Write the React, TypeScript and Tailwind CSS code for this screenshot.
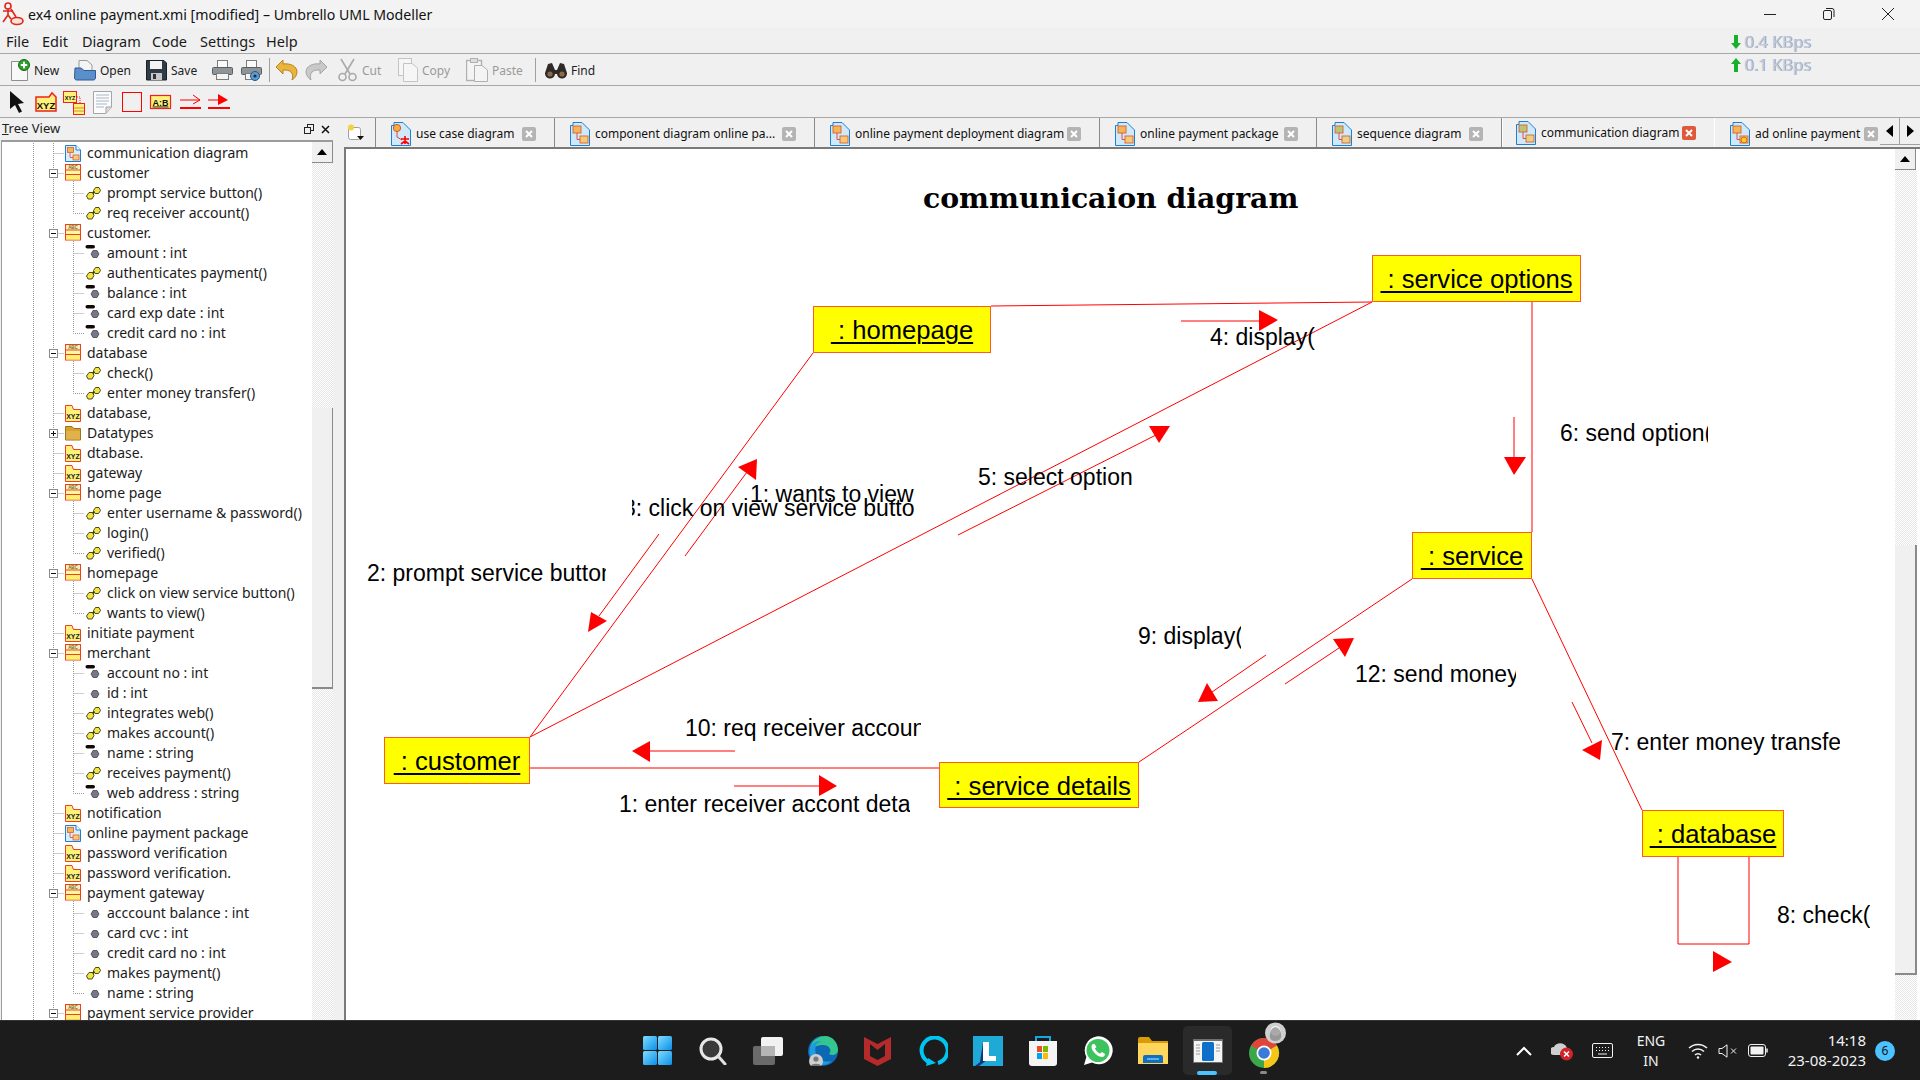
import React from "react";

const RED = "#ff0000";

/* ---------- tree ---------- */
type Kind = "class" | "xyz" | "folder" | "diagram" | "op" | "attr" | "priv";
type Row = { t: string; k: Kind; exp?: "-" | "+"; first?: boolean; last?: boolean };

const rows: Row[] = [
  { t: "communication diagram", k: "diagram" },
  { t: "customer", k: "class", exp: "-" },
  { t: "prompt service button()", k: "op" },
  { t: "req receiver account()", k: "op", last: true },
  { t: "customer.", k: "class", exp: "-" },
  { t: "amount : int", k: "priv" },
  { t: "authenticates payment()", k: "op" },
  { t: "balance : int", k: "priv" },
  { t: "card exp date : int", k: "priv" },
  { t: "credit card no : int", k: "priv", last: true },
  { t: "database", k: "class", exp: "-" },
  { t: "check()", k: "op" },
  { t: "enter money transfer()", k: "op", last: true },
  { t: "database,", k: "xyz" },
  { t: "Datatypes", k: "folder", exp: "+" },
  { t: "dtabase.", k: "xyz" },
  { t: "gateway", k: "xyz" },
  { t: "home page", k: "class", exp: "-" },
  { t: "enter username & password()", k: "op" },
  { t: "login()", k: "op" },
  { t: "verified()", k: "op", last: true },
  { t: "homepage", k: "class", exp: "-" },
  { t: "click on view service button()", k: "op" },
  { t: "wants to view()", k: "op", last: true },
  { t: "initiate payment", k: "xyz" },
  { t: "merchant", k: "class", exp: "-" },
  { t: "account no : int", k: "priv" },
  { t: "id : int", k: "attr" },
  { t: "integrates web()", k: "op" },
  { t: "makes account()", k: "op" },
  { t: "name : string", k: "priv" },
  { t: "receives payment()", k: "op" },
  { t: "web address : string", k: "priv", last: true },
  { t: "notification", k: "xyz" },
  { t: "online payment package", k: "diagram" },
  { t: "password verification", k: "xyz" },
  { t: "password verification.", k: "xyz" },
  { t: "payment gateway", k: "class", exp: "-" },
  { t: "acccount balance : int", k: "attr" },
  { t: "card cvc : int", k: "attr" },
  { t: "credit card no : int", k: "attr" },
  { t: "makes payment()", k: "op" },
  { t: "name : string", k: "attr", last: true },
  { t: "payment service provider", k: "class", exp: "-" },
];

const Dot = "#9a9a9a";

function DiagramGlyph({ x = 0, y = 0 }: { x?: number; y?: number }) {
  return (
    <g transform={`translate(${x} ${y})`}>
      <path d="M.5.5H11L15.5 5V16.5H.5Z" fill="#d8eefc" stroke="#1d7fd0" />
      <path d="M11 .5V5H15.5" fill="#fff" stroke="#1d7fd0" />
      <rect x="2.5" y="2.5" width="6" height="5" fill="#f4b45a" stroke="#d9622a" strokeWidth=".8" />
      <rect x="8" y="10" width="6" height="5" fill="#f7c878" stroke="#d9622a" strokeWidth=".8" />
      <path d="M5 8V12.5H8" fill="none" stroke="#e0403a" strokeWidth=".8" />
    </g>
  );
}

function ClassGlyph({ x = 0, y = 0 }: { x?: number; y?: number }) {
  return (
    <g transform={`translate(${x} ${y})`}>
      <rect x=".5" y=".5" width="15" height="15.5" fill="#fff7a8" stroke="#f0401c" />
      <rect x="1" y="1" width="14" height="4.5" fill="#f2f2c0" />
      <text x="8" y="5" fontSize="4.5" fontWeight="700" textAnchor="middle" fill="#707020" fontFamily="Liberation Sans, sans-serif">ABC</text>
      <path d="M1 6H15M1 10.5H15" stroke="#f0401c" />
      <rect x="1" y="11" width="14" height="4.5" fill="#fff070" />
    </g>
  );
}

function XyzGlyph({ x = 0, y = 0 }: { x?: number; y?: number }) {
  return (
    <g transform={`translate(${x} ${y})`}>
      <path d="M.5 16.5V.5H7L8.5 4.5H15.5V16.5Z" fill="#fff27a" stroke="#f0401c" />
      <text x="8" y="14" fontSize="7" fontWeight="700" textAnchor="middle" fill="#222" fontFamily="Liberation Sans, sans-serif">XYZ</text>
    </g>
  );
}

function RowGlyph({ r }: { r: Row }) {
  const child = r.k === "op" || r.k === "attr" || r.k === "priv";
  return (
    <svg width={child ? 107 : 87} height={20} className="shrink-0">
      <g stroke={Dot} strokeDasharray="1 1" fill="none">
        <path d="M33.5 0V20" />
        <path d="M53.5 0V20" />
        {child && <path d={r.last ? "M73.5 0V10.5H84" : "M73.5 0V20M73.5 10.5H84"} />}
        {!child && <path d="M53.5 10.5H64" />}
        {r.exp === "-" && <path d="M73.5 18V20" />}
      </g>
      {r.exp && (
        <g>
          <rect x="49.5" y="6.5" width="8" height="8" fill="#fff" stroke="#8c8c8c" />
          <path d={r.exp === "-" ? "M51 10.5H56" : "M51 10.5H56M53.5 8V13"} stroke="#111" />
        </g>
      )}
      {r.k === "class" && <ClassGlyph x={65} y={1} />}
      {r.k === "xyz" && <XyzGlyph x={65} y={2} />}
      {r.k === "diagram" && <DiagramGlyph x={65} y={2} />}
      {r.k === "folder" && (
        <g>
          <path d="M65.5 17V3.5H72L74 5.5H80.5V17Z" fill="#d9a22e" stroke="#9a7420" />
          <path d="M66 8H80V16.5H66Z" fill="#e2b24a" />
        </g>
      )}
      {r.k === "op" && (
        <g stroke="#3a3a10" strokeWidth=".9" fill="#f3e43e">
          <path d="M92 11L97 6" stroke="#3a3a10" strokeWidth="2" />
          <path d="M89 9.5L92.5 9.5L94 12.5L92 16L88 16L86.5 13Z" />
          <path d="M95.5 4.5L99 4.5L100.5 7.5L98.5 10.5L95 10.5L93.5 7.5Z" />
        </g>
      )}
      {(r.k === "attr" || r.k === "priv") && (
        <path d="M93 7.5H97L99 11L97 14.5H93L91 11Z" fill="#77778a" stroke="#444" strokeWidth=".8" />
      )}
      {r.k === "priv" && <rect x="85.5" y="2" width="9.5" height="3.6" rx="1.8" fill="#120808" />}
    </svg>
  );
}

function TreeRow({ r }: { r: Row }) {
  return (
    <div className="-ml-[2px] flex h-[20px] items-center whitespace-nowrap text-[14px] leading-[20px] text-[#1c1c1c]">
      <RowGlyph r={r} />
      <span>{r.t}</span>
    </div>
  );
}

function UpBtn() {
  return (
    <div className="flex h-[21px] w-[21px] shrink-0 items-center justify-center border-r border-b border-[#8a8a8a] bg-[#f0f0f0]">
      <svg width="10" height="6"><path d="M0 6L5 0L10 6Z" fill="#000" /></svg>
    </div>
  );
}

const dither = "bg-[repeating-conic-gradient(#ffffff_0_25%,#e6e6e6_0_50%)] bg-[length:2px_2px]";

/* ---------- diagram ---------- */
const nodes = [
  { n: " : homepage", x: 813, y: 306, w: 178, h: 47 },
  { n: " : service options", x: 1372, y: 255, w: 209, h: 47 },
  { n: " : service", x: 1412, y: 532, w: 120, h: 47 },
  { n: " : customer", x: 384, y: 737, w: 146, h: 47 },
  { n: " : service details", x: 939, y: 762, w: 200, h: 46 },
  { n: " : database", x: 1642, y: 810, w: 142, h: 47 },
];

const labels = [
  { t: "4: display(", x: 1210, y: 337, w: 110 },
  { t: "5: select option", x: 978, y: 477, w: 170 },
  { t: "6: send option(", x: 1560, y: 433, w: 148 },
  { t: "1: wants to view()", x: 750, y: 494, w: 165 },
  { t: "3: click on view service button()", x: 632, y: 508, w: 283, off: -9 },
  { t: "2: prompt service button()", x: 367, y: 573, w: 239 },
  { t: "10: req receiver account()", x: 685, y: 728, w: 236 },
  { t: "1: enter receiver accont details()", x: 619, y: 804, w: 291 },
  { t: "9: display(", x: 1138, y: 636, w: 103 },
  { t: "12: send money()", x: 1355, y: 674, w: 161 },
  { t: "7: enter money transfer()", x: 1611, y: 742, w: 229 },
  { t: "8: check()", x: 1777, y: 915, w: 93 },
];

const lines: [number, number, number, number][] = [
  [991, 306, 1372, 302],
  [530, 737, 813, 353],
  [530, 737, 1372, 302],
  [530, 768, 939, 768],
  [1139, 762, 1412, 579],
  [1532, 302, 1532, 532],
  [1532, 579, 1642, 810],
  [1181, 321, 1260, 321],
  [958, 535, 1158, 434],
  [1514, 417, 1514, 458],
  [685, 556, 747, 472],
  [659, 534, 599, 616],
  [735, 751, 650, 751],
  [734, 786, 820, 786],
  [1266, 655, 1212, 692],
  [1285, 684, 1339, 648],
  [1572, 702, 1592, 743],
];

const tris = [
  "1259,310 1259,331 1278,320",
  "1149,426 1170,426 1159,443",
  "1504,457 1526,457 1514,475",
  "738,467 757,459 756,480",
  "588,632 591,612 607,621",
  "650,741 650,762 632,751",
  "819,775 819,796 837,786",
  "1207,683 1218,701 1198,702",
  "1333,639 1354,638 1345,657",
  "1582,750 1602,740 1600,760",
  "1713,951 1713,972 1732,962",
];

function Diagram() {
  return (
    <div className="absolute left-[-346px] top-[-149px] h-[1080px] w-[1920px]">
      <svg width="1920" height="1080" className="absolute left-0 top-0">
        {lines.map((l, i) => (
          <line key={i} x1={l[0]} y1={l[1]} x2={l[2]} y2={l[3]} stroke={RED} strokeWidth="1" />
        ))}
        <path d="M1678 857V944H1749V857" fill="none" stroke={RED} strokeWidth="1" />
        {tris.map((p, i) => (
          <polygon key={i} points={p} fill={RED} />
        ))}
      </svg>
      <div className="absolute left-[923px] top-[179px] whitespace-nowrap font-['DejaVu_Serif',serif] text-[28.3px] leading-[38px] font-bold text-black">
        communicaion diagram
      </div>
      {nodes.map((n) => (
        <div
          key={n.n}
          className="absolute flex items-center justify-center border border-[#ff5a2a] bg-[#ffff00] pt-[2px] font-['Liberation_Sans',sans-serif] text-[25.6px] text-black"
          style={{ left: n.x, top: n.y, width: n.w, height: n.h }}
        >
          <span className="whitespace-pre underline decoration-2 underline-offset-[3px]">{n.n}</span>
        </div>
      ))}
      {labels.map((l) => (
        <div
          key={l.t}
          className="absolute h-[32px] overflow-hidden whitespace-pre font-['Liberation_Sans',sans-serif] text-[23px] leading-[32px] text-black"
          style={{ left: l.x, top: l.y - 16, width: l.w, textIndent: l.off ?? 0 }}
        >
          {l.t}
        </div>
      ))}
    </div>
  );
}

/* ---------- toolbar icons ---------- */
const Doc = ({ stroke = "#8f8f8f", fill = "#f8f8f8" }: { stroke?: string; fill?: string }) => (
  <path d="M3.5 2.5H14L19.5 8V21.5H3.5Z" fill={fill} stroke={stroke} />
);

const IconNew = () => (
  <svg width="22" height="22">
    <Doc />
    <circle cx="16" cy="6" r="5.5" fill="#2fa02f" stroke="#146a14" />
    <path d="M16 2.8V9.2M12.8 6H19.2" stroke="#fff" strokeWidth="2" />
  </svg>
);
const IconOpen = () => (
  <svg width="22" height="22">
    <path d="M5 1.5H13L18 6V12H5Z" fill="#f4f4f4" stroke="#9a9a9a" />
    <path d="M1 9H7L10 11.5H21.5V19C21.5 20 20.5 21 19.5 21H2.5C1.5 21 .5 20 .5 19Z" fill="#5b8fc9" stroke="#2b5c96" />
  </svg>
);
const IconSave = () => (
  <svg width="21" height="22">
    <path d="M.5 1.5H18L20.5 4V21H.5Z" fill="#2f3b47" stroke="#1a2028" />
    <rect x="4" y="2" width="12" height="8" fill="#f4f4f4" />
    <rect x="5" y="14" width="11" height="7" fill="#c7c7c7" />
    <rect x="7" y="15" width="3" height="5" fill="#333" />
  </svg>
);
const IconPrint = ({ eye }: { eye?: boolean }) => (
  <svg width="22" height="22">
    <rect x="6.5" y="1.5" width="10" height="7" fill="#fafafa" stroke="#7b7b7b" />
    <rect x="1.5" y="8.5" width="20" height="7" rx="1" fill="#8e9498" stroke="#5a5f63" />
    <rect x="5.5" y="14.5" width="12" height="6" fill="#f4f4f4" stroke="#7b7b7b" />
    {eye && <circle cx="15" cy="17" r="4.5" fill="#5c9bd0" stroke="#28577d" />}
    {eye && <circle cx="15" cy="17" r="1.6" fill="#14314a" />}
  </svg>
);
const IconUndo = ({ gray, flip }: { gray?: boolean; flip?: boolean }) => (
  <svg width="23" height="22" className={flip ? "-scale-x-100" : ""}>
    <path
      d="M1 8L8 1V5C15 4 22 7 22 13C22 16 20 19 17 21C18 18 18 15 16 13C14 11 11 11 8 11V15Z"
      fill={gray ? "#c9c9c9" : "#e9b53c"}
      stroke={gray ? "#a5a5a5" : "#b5831e"}
    />
  </svg>
);
const IconCut = () => (
  <svg width="21" height="24" stroke="#a9a9a9" fill="none">
    <path d="M4 1L13 16M17 1L8 16" strokeWidth="1.6" />
    <circle cx="5.5" cy="19" r="3.5" strokeWidth="1.6" />
    <circle cx="15.5" cy="19" r="3.5" strokeWidth="1.6" />
  </svg>
);
const IconCopy = () => (
  <svg width="20" height="24" fill="#f6f6f6" stroke="#c4c4c4">
    <rect x=".5" y=".5" width="13" height="17" />
    <path d="M5.5 5.5H14L19.5 10V23.5H5.5Z" />
  </svg>
);
const IconPaste = () => (
  <svg width="22" height="24" fill="#f4f4f4" stroke="#b0b0b0">
    <rect x=".5" y="2.5" width="15" height="20" strokeWidth="1.4" />
    <rect x="4.5" y=".5" width="7" height="4" fill="#ddd" />
    <path d="M8.5 7.5H16L21.5 12V23.5H8.5Z" />
  </svg>
);
const IconFind = () => (
  <svg width="22" height="18">
    <path d="M7 2L10 9H12L15 2L19 3L22 12A5 5 0 1 1 12 13H10A5 5 0 1 1 0 12L3 3Z" fill="#2e2a27" />
    <circle cx="5" cy="13" r="2.6" fill="#8a6a48" />
    <circle cx="17" cy="13" r="2.6" fill="#8a6a48" />
  </svg>
);

const tb = [
  { w: "w-[66px]", i: <IconNew />, t: "New" },
  { w: "w-[72px]", i: <IconOpen />, t: "Open" },
  { w: "w-[65px]", i: <IconSave />, t: "Save" },
  { w: "w-[29px]", i: <IconPrint /> },
  { w: "w-[29px]", i: <IconPrint eye /> },
];
const tb2 = [
  { w: "w-[30px]", i: <IconUndo /> },
  { w: "w-[32px]", i: <IconUndo gray flip /> },
  { w: "w-[61px]", i: <IconCut />, t: "Cut", dim: true },
  { w: "w-[68px]", i: <IconCopy />, t: "Copy", dim: true },
  { w: "w-[69px]", i: <IconPaste />, t: "Paste", dim: true },
];

function Tool({ w, i, t, dim }: { w: string; i: React.ReactNode; t?: string; dim?: boolean }) {
  return (
    <div className={`flex shrink-0 items-center gap-[4px] ${w}`}>
      {i}
      {t && <span className={`pt-[2px] text-[12px] ${dim ? "text-[#9a9a9a]" : "text-[#222]"}`}>{t}</span>}
    </div>
  );
}

/* ---------- tabs ---------- */
function TabIcon({ v }: { v: number }) {
  return (
    <svg width="20" height="24" className="mr-[5px] shrink-0">
      <path d="M.5 3.5H3V.5H12L19.5 8V23.5H.5Z" fill="#cfe9fb" stroke="#1d7fd0" />
      {v === 0 && (
        <g>
          <circle cx="6" cy="6" r="3.6" fill="#f2b13b" stroke="#d9532a" />
          <path d="M6 10V15L11 18" stroke="#e0403a" fill="none" />
          <path d="M14 14V22M10 17H18M10 22L14 19L18 22" stroke={RED} strokeWidth="1.6" fill="none" />
        </g>
      )}
      {v !== 0 && (
        <g stroke="#d9622a" strokeWidth=".9">
          <rect x="3" y="4" width="8" height="7" fill={v === 3 ? "#bcc47a" : "#f4b45a"} />
          <rect x="10" y="14" width="8" height="7" fill={v === 3 ? "#e6d08a" : "#f7c878"} />
          <path d="M7 11V17.5H10" fill="none" stroke="#e0403a" />
        </g>
      )}
      {v === 4 && <circle cx="14" cy="18" r="3" fill="#f5d020" stroke="#d9622a" />}
    </svg>
  );
}
function TabClose({ active }: { active?: boolean }) {
  return (
    <div
      className={`ml-auto mr-[18px] flex h-[14px] w-[14px] shrink-0 items-center justify-center rounded-[2px] ${
        active ? "bg-[#e0593a]" : "bg-[#b4b4b4]"
      }`}
    >
      <svg width="8" height="8"><path d="M1 1L7 7M7 1L1 7" stroke="#fff" strokeWidth="2" /></svg>
    </div>
  );
}
const tabs = [
  { t: "use case diagram", w: "w-[179px]", v: 0 },
  { t: "component diagram online pa...", w: "w-[260px]", v: 1 },
  { t: "online payment deployment diagram", w: "w-[285px]", v: 1 },
  { t: "online payment package", w: "w-[217px]", v: 1 },
  { t: "sequence diagram", w: "w-[185px]", v: 3 },
  { t: "communication diagram", w: "w-[213px]", v: 3, active: true },
  { t: "ad online payment", w: "w-[182px]", v: 4 },
];

/* ---------- taskbar ---------- */
const TaskIcons = [
  <svg key="win" width="30" height="30">
    <defs>
      <linearGradient id="w" x1="0" y1="0" x2="1" y2="1">
        <stop offset="0" stopColor="#7fdcff" />
        <stop offset="1" stopColor="#0a8fe8" />
      </linearGradient>
    </defs>
    <rect x="0" y="0" width="14" height="14" rx="1.5" fill="url(#w)" />
    <rect x="15" y="0" width="14" height="14" rx="1.5" fill="url(#w)" />
    <rect x="0" y="15" width="14" height="14" rx="1.5" fill="url(#w)" />
    <rect x="15" y="15" width="14" height="14" rx="1.5" fill="url(#w)" />
  </svg>,
  <svg key="search" width="28" height="28" fill="none">
    <circle cx="12" cy="12" r="10" fill="#3a3a3a" stroke="#e8e8e8" strokeWidth="3" />
    <path d="M19 19L26 27" stroke="#e0e0e0" strokeWidth="3" strokeLinecap="round" />
  </svg>,
  <svg key="tv" width="30" height="28">
    <rect x="8" y="0" width="22" height="19" rx="2" fill="#f2f2f2" />
    <rect x="0" y="9" width="22" height="19" rx="2" fill="#6a6a6a" />
    <rect x="8" y="9" width="14" height="10" fill="#b5b5b5" />
  </svg>,
  <svg key="edge" width="30" height="30">
    <circle cx="15" cy="15" r="15" fill="#0c67b5" />
    <path d="M2 12C4 3 12 0 17 0C25 0 30 7 30 14C30 19 24 20 21 18C24 15 22 9 15 9C9 9 4 11 2 16Z" fill="#35c58f" />
    <path d="M2 12C4 6 10 4 14 6C8 6 6 12 8 18C10 24 17 27 24 25C18 31 9 30 4 23C1 19 1 15 2 12Z" fill="#1f9be0" />
    <circle cx="8" cy="25" r="7" fill="#cfcfcf" />
    <circle cx="8" cy="23" r="2.6" fill="#777" />
    <path d="M3 30C3 27 13 27 13 30Z" fill="#777" />
  </svg>,
  <svg key="mc" width="27" height="30">
    <path d="M0 1L13.5 8L27 1V23L13.5 30L0 23Z" fill="#b52a2a" />
    <path d="M6 8L13.5 14L21 8V20L13.5 24L6 20Z" fill="#1c1c1c" />
  </svg>,
  <svg key="alexa" width="30" height="30" fill="none">
    <path d="M12 26.6A13 13 0 1 1 20 27" stroke="#00c5f0" strokeWidth="4" />
    <path d="M10 22L8 30L18 27Z" fill="#00c5f0" />
  </svg>,
  <svg key="L" width="30" height="30">
    <rect width="30" height="30" fill="#1fa9d6" />
    <path d="M7 26L10 6V24H14L6 30H2Z" fill="#10367a" />
    <path d="M10 6H16V20H23V25H10Z" fill="#fff" />
  </svg>,
  <svg key="store" width="30" height="30">
    <path d="M8 5V1H22V5" fill="none" stroke="#16a7e0" strokeWidth="2" />
    <path d="M1 5H29V27A3 3 0 0 1 26 30H4A3 3 0 0 1 1 27Z" fill="#f4f4f4" />
    <rect x="9" y="10" width="5" height="6" fill="#ea4e22" />
    <rect x="15" y="10" width="5" height="6" fill="#7db900" />
    <rect x="9" y="17" width="5" height="6" fill="#00a4ef" />
    <rect x="15" y="17" width="5" height="6" fill="#ffb900" />
  </svg>,
  <svg key="wa" width="30" height="30">
    <path d="M1 29L3.4 21A14 14 0 1 1 9 26.6Z" fill="#fff" />
    <circle cx="15" cy="14.5" r="11.5" fill="#3cc35d" />
    <path d="M10 8C8 9 8 12 10 15C12 18 16 21 19 21C21 21 22 19 22 18L19 16L17 17.500C15 17 12.500 14 12 12.500L13.500 11L11.500 8Z" fill="#fff" />
  </svg>,
  <svg key="fo" width="30" height="28">
    <path d="M0 2A2 2 0 0 1 2 0H11L14 4H30V10H0Z" fill="#d99c08" />
    <path d="M0 6H30V27H0Z" fill="#ffd65c" />
    <path d="M5 26V20A2 2 0 0 1 7 18H23A2 2 0 0 1 25 20V26Z" fill="#0f6fc0" />
    <path d="M9 22H21" stroke="#7cc4f5" strokeWidth="1.5" />
  </svg>,
  null,
  <svg key="ch" width="38" height="46" className="mt-[-12px] ml-[11px]">
    <circle cx="15" cy="31" r="15" fill="#3ba74a" />
    <path d="M15 31L2.100 23.500A15 15 0 0 1 28 23.500Z" fill="#e0443a" />
    <path d="M15 31L28 23.500A15 15 0 0 1 15 46Z" fill="#f5c518" />
    <circle cx="15" cy="31" r="7.5" fill="#fff" />
    <circle cx="15" cy="31" r="5.8" fill="#3b7bd8" />
    <circle cx="26.500" cy="11" r="10.500" fill="#d0d0d0" />
    <circle cx="26.500" cy="9" r="5" fill="#f5f5f5" />
    <path d="M21 12C22 3 31 3 32 12C33 17 30 19 26 19C22 19 20 16 21 12Z" fill="#6a6a6a" opacity=".55" />
  </svg>,
];

export default function App() {
  return (
    <div className="flex h-[1080px] w-[1920px] flex-col overflow-hidden bg-[#f0f0f0] font-['Noto_Sans',sans-serif]">
      {/* title bar */}
      <div className="flex h-[28px] shrink-0 items-center bg-[#f3f3f3]">
        <svg width="24" height="24" className="ml-[2px] shrink-0" fill="none" stroke="#e0261c" strokeWidth="1.6">
          <circle cx="6" cy="4" r="3" />
          <path d="M6 7V13M1 9H11M6 13L1 20M6 13L9 17" />
          <ellipse cx="15" cy="19" rx="6" ry="3.500" fill="#fbe3d8" />
          <path d="M9 7L14 15" />
        </svg>
        <span className="ml-[2px] whitespace-nowrap pt-[2px] text-[14.15px] text-[#111]">
          ex4 online payment.xmi [modified] – Umbrello UML Modeller
        </span>
        <div className="ml-auto flex items-center text-[#222]">
          <svg width="14" height="14" className="mr-[45px]"><path d="M1 7.500H13" stroke="#222" /></svg>
          <svg width="13" height="14" fill="none" stroke="#222" className="mr-[46px]">
            <rect x="1.500" y="3.500" width="8" height="9" rx="1.500" />
            <path d="M4 1.500H10A2 2 0 0 1 12 3.500V10" />
          </svg>
          <svg width="14" height="14" className="mr-[25px]" stroke="#222"><path d="M1 1L13 13M13 1L1 13" /></svg>
        </div>
      </div>

      {/* menu bar */}
      <div className="relative flex h-[26px] shrink-0 items-center border-b border-[#a8a8a8] pl-[6px] pt-[2px] text-[14.5px] text-[#1a1a1a]">
        <span className="w-[36px]">File</span>
        <span className="w-[40px]">Edit</span>
        <span className="w-[70px]">Diagram</span>
        <span className="w-[48px]">Code</span>
        <span className="w-[66px]">Settings</span>
        <span>Help</span>
        <div className="absolute left-[1731px] top-[2px] flex items-center">
          <svg width="10" height="14"><path d="M3 0H7V8H10L5 14L0 8H3Z" fill="#16b02c" /></svg>
          <span className="ml-[3px] whitespace-nowrap text-[16.5px] text-[#c4ccd8] [text-shadow:1px_0_0_#8fa0c0]">0.4 KBps</span>
        </div>
      </div>

      {/* toolbar 1 */}
      <div className="relative flex h-[32px] shrink-0 items-center border-b border-[#a8a8a8] pl-[8px]">
        {tb.map((b, i) => <Tool key={i} {...b} />)}
        <div className="mr-[5px] h-[24px] w-px shrink-0 bg-[#a0a0a0]" />
        {tb2.map((b, i) => <Tool key={i} {...b} />)}
        <div className="mr-[9px] h-[24px] w-px shrink-0 bg-[#a0a0a0]" />
        <Tool w="w-[60px]" i={<IconFind />} t="Find" />
        <div className="absolute left-[1731px] top-[-1px] flex items-center">
          <svg width="10" height="14"><path d="M3 14H7V6H10L5 0L0 6H3Z" fill="#16b02c" /></svg>
          <span className="ml-[3px] whitespace-nowrap text-[16.5px] text-[#c4ccd8] [text-shadow:1px_0_0_#8fa0c0]">0.1 KBps</span>
        </div>
      </div>

      {/* toolbar 2 */}
      <div className="flex h-[32px] shrink-0 items-center border-b border-[#a8a8a8]">
        <svg width="232" height="26" className="ml-[8px]">
          <path d="M2 2V20L7 16L11 24L14 22.500L10 15L16 14Z" fill="#111" />
          <g transform="translate(27 3)">
            <path d="M1 19V5H14L17 1L21 5V19Z" fill="#fff27a" stroke="#f0201c" strokeWidth="1.500" />
            <text x="11" y="17" fontSize="9.500" fontWeight="700" textAnchor="middle" fill="#111" fontFamily="Liberation Sans, sans-serif">XYZ</text>
          </g>
          <g transform="translate(55 0)">
            <rect x=".5" y="2.500" width="13" height="11" fill="#fff27a" stroke="#f0201c" />
            <text x="7" y="11" fontSize="5.500" fontWeight="700" textAnchor="middle" fill="#111" fontFamily="Liberation Sans, sans-serif">XYZ</text>
            <rect x="10.500" y="14.500" width="11" height="11" fill="#fff27a" stroke="#f0201c" />
            <path d="M11 19H21M11 22H21" stroke="#d09030" />
            <path d="M14 8H17V14" stroke="#f0201c" strokeDasharray="1 1" fill="none" />
          </g>
          <g transform="translate(85 2)">
            <path d="M.5.5H18.500V16L13 22.500H.5Z" fill="#fbfbfb" stroke="#a5a5a5" />
            <path d="M13 22V16H18.500" fill="#ddd" stroke="#a5a5a5" />
            <path d="M3 4H16M3 7H16M3 10H16M3 13H14M3 16H11" stroke="#a7b8cc" />
          </g>
          <rect x="114.500" y="3.500" width="19" height="19" fill="none" stroke={RED} />
          <g transform="translate(142 6)">
            <rect x=".5" y=".5" width="20" height="13" fill="#fff27a" stroke="#f0201c" strokeWidth="1.200" />
            <text x="10.500" y="10.500" fontSize="9" fontWeight="700" textAnchor="middle" fill="#111" textDecoration="underline" fontFamily="Liberation Sans, sans-serif">A:B</text>
          </g>
          <g stroke={RED} fill="none">
            <path d="M172 19H193" strokeWidth="2" />
            <path d="M172 11H192M185 6L192 11L185 15" />
            <path d="M200 19H222" strokeWidth="2" />
            <path d="M200 11H212" />
          </g>
          <path d="M210 5L220 11L210 16Z" fill={RED} />
        </svg>
      </div>

      {/* main */}
      <div className="flex min-h-0 flex-1">
        {/* tree panel */}
        <div className="flex w-[341px] shrink-0 flex-col">
          <div className="flex h-[22px] shrink-0 items-center pl-[2px] text-[13px] text-[#222]">
            <span><span className="underline">T</span>ree View</span>
            <svg width="10" height="10" className="ml-auto mr-[7px]" fill="none" stroke="#222">
              <rect x="3.500" y=".5" width="6" height="6" />
              <rect x=".5" y="3.500" width="6" height="6" fill="#f0f0f0" />
            </svg>
            <svg width="9" height="9" className="mr-[11px]" stroke="#111" strokeWidth="1.500">
              <path d="M1 1L8 8M8 1L1 8" />
            </svg>
          </div>
          <div className="mr-[8px] ml-px flex min-h-0 flex-1 border-t-2 border-l border-[#9c9c9c] bg-white">
            <div className="min-w-0 flex-1 overflow-hidden pt-px">
              {rows.map((r, i) => <TreeRow key={i} r={r} />)}
            </div>
            <div className="flex w-[21px] shrink-0 flex-col">
              <UpBtn />
              <div className={`h-[245px] shrink-0 ${dither}`} />
              <div className="h-[281px] shrink-0 border-r border-b-2 border-[#8a8a8a] bg-[#f0f0f0]" />
              <div className={`flex-1 ${dither}`} />
            </div>
          </div>
        </div>

        {/* document area */}
        <div className="flex min-w-0 flex-1 flex-col">
          <div className="flex h-[29px] shrink-0">
            <div className="flex w-[35px] shrink-0 items-center border-r border-[#8a8a8a] pl-[6px]">
              <svg width="18" height="17">
                <rect x="1.500" y="3.500" width="12" height="12" rx="2" fill="#fff" stroke="#a0a0a0" />
                <circle cx="4" cy="3.500" r="3" fill="#f4d23e" />
                <path d="M10 12H17L13.500 16Z" fill="#111" />
              </svg>
            </div>
            <div className="flex min-w-0 flex-1 overflow-hidden">
              {tabs.map((t) => (
                <div
                  key={t.t}
                  className={`flex shrink-0 items-center whitespace-nowrap text-[12px] text-[#111] ${t.w} ${
                    t.active ? "border-x border-white pl-[13px]" : "border-r border-[#8a8a8a] pl-[15px] pt-[2px]"
                  }`}
                >
                  <TabIcon v={t.v} />
                  <span>{t.t}</span>
                  <TabClose active={t.active} />
                </div>
              ))}
            </div>
            <div className="flex h-[27px] w-[20px] shrink-0 items-center justify-center border-r border-b border-[#a0a0a0] bg-[#f0f0f0]">
              <svg width="7" height="12"><path d="M7 0V12L0 6Z" fill="#000" /></svg>
            </div>
            <div className="flex h-[27px] w-[20px] shrink-0 items-center justify-center border-b border-[#a0a0a0] bg-[#f0f0f0]">
              <svg width="7" height="12"><path d="M0 0V12L7 6Z" fill="#000" /></svg>
            </div>
          </div>
          <div className="ml-[3px] flex min-h-0 flex-1 border-t-2 border-l-2 border-[#7a7a7a] bg-white">
            <div className="relative min-w-0 flex-1 overflow-hidden">
              <Diagram />
            </div>
            <div className="mr-[3px] flex w-[22px] shrink-0 flex-col">
              <UpBtn />
              <div className={`h-[375px] shrink-0 ${dither}`} />
              <div className="h-[430px] shrink-0 border-r-2 border-b-2 border-[#8a8a8a] bg-[#f0f0f0]" />
              <div className={`flex-1 ${dither}`} />
            </div>
          </div>
        </div>
      </div>

      {/* taskbar */}
      <div className="relative flex h-[60px] shrink-0 items-center border-t border-[#333] bg-[#1c1c1c] pl-[630px]">
        {TaskIcons.map((ic, i) =>
          ic ? (
            <div key={i} className="flex h-[55px] w-[55px] shrink-0 items-center justify-center">{ic}</div>
          ) : (
            <div key={i} className="flex h-[49px] w-[55px] shrink-0 items-center justify-center">
              <div className="relative flex h-[49px] w-[49px] items-center justify-center rounded-[5px] bg-[#2a2a2a]">
                <svg width="30" height="24">
                  <rect width="30" height="24" fill="#6f6f6f" />
                  <rect x="1" y="2" width="28" height="21" fill="#f4f4f4" />
                  <rect x="9" y="3" width="12" height="19" rx="1.500" fill="#0d6fc8" />
                  <path d="M3 6H7M3 9H7M3 12H7M3 15H7M23 6H27M23 9H27M23 12H27" stroke="#9a9a9a" />
                </svg>
                <div className="absolute bottom-0 left-[14px] h-[4px] w-[20px] rounded-[2px] bg-[#4cc2ff]" />
              </div>
            </div>
          )
        )}
        <div className="absolute bottom-[6px] left-[1260px] h-[3px] w-[7px] rounded-[2px] bg-[#8a8a8a]" />

        <div className="ml-auto flex items-center text-[#f2f2f2]">
          <svg width="16" height="10" fill="none" stroke="#fff" strokeWidth="2" className="mr-[19px]">
            <path d="M1 9L8 2L15 9" />
          </svg>
          <svg width="22" height="20" className="mr-[19px]">
            <path d="M3 14A4 4 0 0 1 3 6C5 1 14 1 16 7A4 4 0 0 1 15 14Z" fill="#cfcfcf" />
            <circle cx="15.500" cy="13" r="6.500" fill="#d2232a" />
            <path d="M13 10.500L18 15.500M18 10.500L13 15.500" stroke="#fff" strokeWidth="1.500" />
          </svg>
          <svg width="21" height="15" fill="none" stroke="#f2f2f2" className="mr-[18px]">
            <rect x=".5" y=".5" width="20" height="14" rx="1.500" />
            <path d="M4 4.500H5M7 4.500H8M10 4.500H11M13 4.500H14M16 4.500H17M4 7.500H5M7 7.500H8M10 7.500H11M13 7.500H14M16 7.500H17M6 11H15" />
          </svg>
          <div className="flex w-[40px] flex-col items-center text-[14px] leading-[20px]">
            <span>ENG</span>
            <span>IN</span>
          </div>
          <svg width="20" height="16" fill="none" stroke="#f2f2f2" strokeWidth="1.500" className="ml-[17px] mr-[10px]">
            <path d="M1 5A13 13 0 0 1 19 5M4 8.500A8.500 8.500 0 0 1 16 8.500M7 12A4 4 0 0 1 13 12" />
            <circle cx="10" cy="14.500" r="1.200" fill="#f2f2f2" stroke="none" />
          </svg>
          <svg width="19" height="14" fill="none" stroke="#f2f2f2" className="mr-[11px]">
            <path d="M1 4.500H4L9 .8V13.200L4 9.500H1Z" />
            <path d="M13 4.500L18 9.500M18 4.500L13 9.500" />
          </svg>
          <svg width="20" height="13" fill="none" stroke="#f2f2f2" className="mr-[20px]">
            <rect x=".5" y=".5" width="17" height="12" rx="2.500" />
            <rect x="2.500" y="2.500" width="13" height="8" rx="1" fill="#f2f2f2" stroke="none" />
            <path d="M19 4.500V8.500" strokeWidth="1.500" />
          </svg>
          <div className="mb-[2px] flex w-[78px] flex-col items-end text-[15px] leading-[20px] whitespace-nowrap">
            <span>14:18</span>
            <span>23-08-2023</span>
          </div>
          <div className="ml-[9px] mr-[25px] flex h-[20px] w-[20px] items-center justify-center rounded-full bg-[#4cc2ff] text-[12px] text-[#111]">
            6
          </div>
        </div>
      </div>
    </div>
  );
}
